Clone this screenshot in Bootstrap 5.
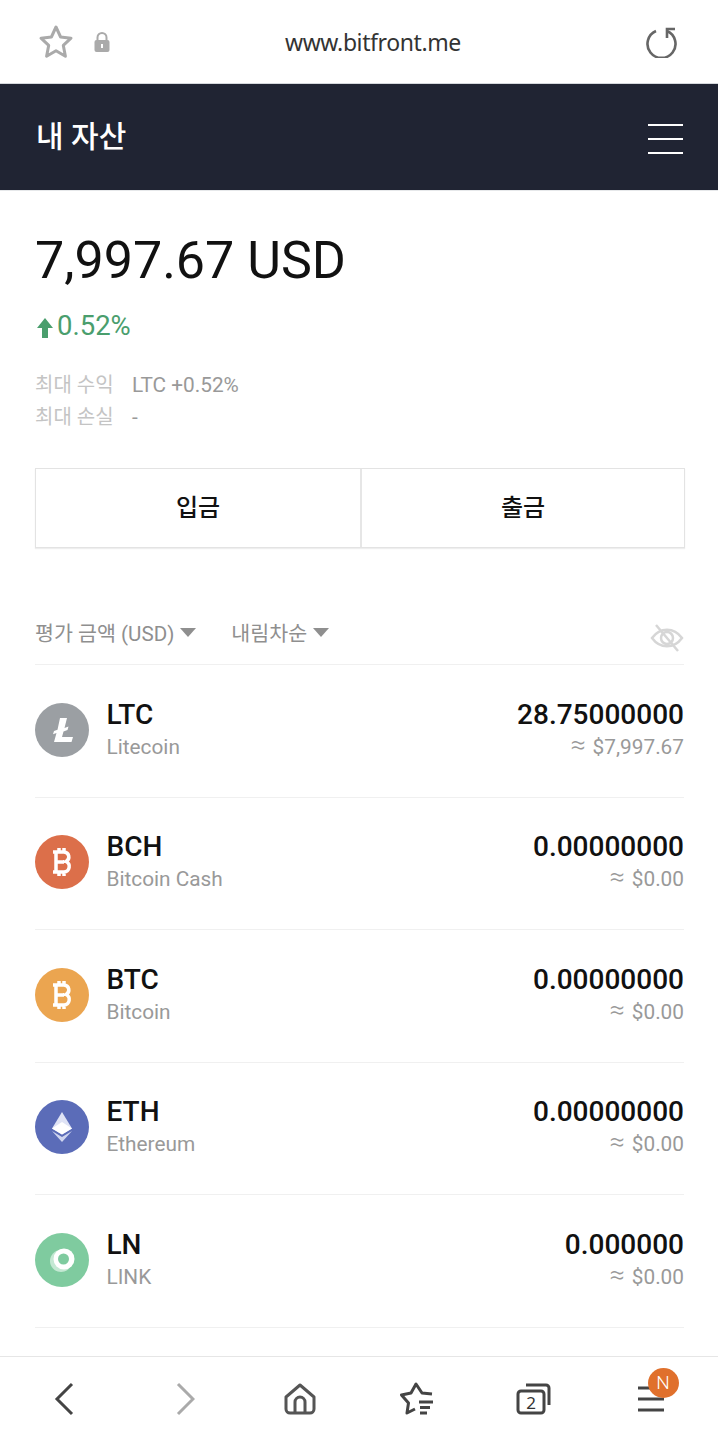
<!DOCTYPE html>
<html lang="ko">
<head>
<meta charset="UTF-8">
<meta name="viewport" content="width=device-width, initial-scale=1.0">
<title>내 자산</title>
<link href="https://cdn.jsdelivr.net/npm/bootstrap@5.3.3/dist/css/bootstrap.min.css" rel="stylesheet">
<style>
body { font-family: Roboto, "Noto Sans CJK KR", sans-serif; color: #111; width: 718px; height: 1440px; overflow: hidden; background: #fff; }
.shell { height: 1440px; }
.url-bar { height: 84px; padding: 0 40px 0 38px; border-bottom: 1px solid #d5d8dc; }
.url-text { font-family: "Noto Sans", sans-serif; font-size: 23px; color: #333; letter-spacing: -0.4px; left: 285px; width: 176px; white-space: nowrap; margin-top: 2px; }
.lock-ic { margin-left: 19px; }
.title-bar { height: 107px; background: #202433; color: #fff; padding: 0 35px 0 36px; border-bottom: 1px solid #e6e8ea; }
.title-text { font-size: 30px; font-weight: 500; line-height: 1; }
.burger { width: 35px; height: 30px; margin-top: 4px; border-top: 2px solid #fff; border-bottom: 2px solid #fff; position: relative; }
.burger::after { content: ""; position: absolute; left: 0; right: 0; top: 12px; height: 2px; background: #fff; }
.content { padding: 0 34px 0 35px; }
.total { font-size: 52px; line-height: 60px; margin-top: 40px; color: #111; }
.rate { font-size: 27.5px; line-height: 32px; color: #4a9e6d; margin-top: 19px; }
.rate svg { margin-left: 2px; }
.stats { margin-top: 28px; font-size: 20px; line-height: 31.5px; color: #c4c4c4; }
.stats span + span { color: #999; margin-left: 18px; font-size: 20.8px; }
.stat-label { display: inline-block; width: 79px; }
.action-row { margin-top: 35px; margin-right: -1px; height: 80px; border: 1px solid #e3e3e3; box-shadow: 0 1px 1px #eee; }
.action-btn { font-size: 24px; font-weight: 500; color: #111; border: 0; background: #fff; border-radius: 0; padding: 0; }
.action-btn + .action-btn { border-left: 2px solid #e6e6e6; }
.sort-row { margin-top: 66px; height: 51px; padding-top: 5px; border-bottom: 1px solid #f0f0f0; font-size: 20.6px; color: #8f8f8f; }
.caret-down { display: inline-block; border-left: 8px solid transparent; border-right: 8px solid transparent; border-top: 9px solid #8f8f8f; margin-left: 6px; vertical-align: 4px; }
.sort-second { margin-left: 35px; }
.coin-row { height: 132.5px; border-bottom: 1px solid #f0f0f0; padding-bottom: 2px; }
.coin-ic { width: 54px; height: 54px; flex: none; margin-right: 17.5px; }
.coin-sym { font-size: 28px; font-weight: 500; line-height: 34px; }
.coin-name { font-size: 20.8px; line-height: 30px; color: #999; }
.coin-amt { font-size: 28px; font-weight: 500; line-height: 34px; text-align: right; }
.coin-usd { font-size: 20.8px; line-height: 30px; color: #999; text-align: right; }
.approx { font-size: 27px; line-height: 20px; margin-right: 7px; font-weight: 300; }
.tool-bar { height: 84px; border-top: 1px solid #e6e6e6; padding-left: 5.5px; }
.tool-slot { width: 117px; }
.tool-badge { position: absolute; top: -18px; left: 10.5px; width: 31px; height: 30px; border-radius: 50%; background: #e0702c; color: #fff; font-size: 19px; line-height: 30px; text-align: center; font-weight: 300; }
</style>
</head>
<body>
<div class="shell d-flex flex-column">
  <div class="url-bar d-flex align-items-center position-relative">
    <svg width="36" height="36" viewBox="0 0 36 36" fill="none" stroke="#aaa" stroke-width="3" stroke-linejoin="round"><path d="M18 3l4.6 10 10.4 1.2-7.700 7.200 2.100 10.800L18 26.800l-9.400 5.400 2.100-10.800L3 14.200 13.400 13z"/></svg>
    <svg class="lock-ic" width="18" height="22" viewBox="0 0 18 22"><path d="M4.500 10V6.500a4.500 4.500 0 0 1 9 0V10" fill="none" stroke="#aaa" stroke-width="2"/><rect x="1.500" y="9" width="15" height="12" rx="2" fill="#aaa"/><rect x="8" y="13" width="2" height="4" fill="#fff"/></svg>
    <div class="url-text position-absolute">www.bitfront.me</div>
    <svg class="ms-auto" width="32" height="32" viewBox="0 0 32 32" fill="none" stroke="#666" stroke-width="2.600"><path d="M10 5a14 14 0 1 0 11 0"/><path d="M21 12V3h8"/></svg>
  </div>
  <div class="title-bar d-flex align-items-center justify-content-between">
    <div class="title-text">내 자산</div>
    <div class="burger"></div>
  </div>
  <div class="content flex-grow-1 overflow-hidden">
    <div class="total">7,997.67 USD</div>
    <div class="rate d-flex align-items-center">
      <svg width="16" height="20" viewBox="0 0 16 20" class="me-1 mt-1"><path d="M8 0l8 10h-5v10H5V10H0z" fill="#4a9e6d"/></svg>0.52%
    </div>
    <div class="stats">
      <div><span class="stat-label">최대 수익</span><span>LTC +0.52%</span></div>
      <div><span class="stat-label">최대 손실</span><span>-</span></div>
    </div>
    <div class="action-row d-flex">
      <button class="action-btn btn flex-fill w-50">입금</button>
      <button class="action-btn btn flex-fill w-50">출금</button>
    </div>
    <div class="sort-row d-flex align-items-start">
      <span>평가 금액 (USD)<i class="caret-down"></i></span>
      <span class="sort-second">내림차순<i class="caret-down"></i></span>
      <svg class="ms-auto mt-1" width="34" height="30" viewBox="0 0 34 30" fill="none" stroke="#d6d6d6" stroke-width="2.500"><path d="M2 15c8-11 22-11 30 0-8 11-22 11-30 0z"/><circle cx="17" cy="15" r="6"/><path d="M6 2l22 26"/></svg>
    </div>

    <div class="coin-row d-flex align-items-center">
      <svg class="coin-ic" viewBox="0 0 54 54"><circle cx="27" cy="27" r="27" fill="#9b9fa3"/><path d="M25 15h7l-2.500 10 4-1.500-1 3.500-4 1.500-1.500 5.500h11l-1.500 5H19l2.500-9-3.500 1.300 1-3.300 3.500-1.300z" fill="#fff"/></svg>
      <div><div class="coin-sym">LTC</div><div class="coin-name">Litecoin</div></div>
      <div class="ms-auto"><div class="coin-amt">28.75000000</div><div class="coin-usd"><span class="approx">≈</span>$7,997.67</div></div>
    </div>
    <div class="coin-row d-flex align-items-center">
      <svg class="coin-ic" viewBox="0 0 54 54"><circle cx="27" cy="27" r="27" fill="#dc6f4a"/><path d="M18 17h11a5 5 0 0 1 2 9.500A5.500 5.500 0 0 1 29 37H18M21 17v20M21 27h8M24 13v4M29 13v4M24 37v4M29 37v4" fill="none" stroke="#fff" stroke-width="3.500"/></svg>
      <div><div class="coin-sym">BCH</div><div class="coin-name">Bitcoin Cash</div></div>
      <div class="ms-auto"><div class="coin-amt">0.00000000</div><div class="coin-usd"><span class="approx">≈</span>$0.00</div></div>
    </div>
    <div class="coin-row d-flex align-items-center">
      <svg class="coin-ic" viewBox="0 0 54 54"><circle cx="27" cy="27" r="27" fill="#eba550"/><path d="M18 17h11a5 5 0 0 1 2 9.500A5.500 5.500 0 0 1 29 37H18M21 17v20M21 27h8M24 13v4M29 13v4M24 37v4M29 37v4" fill="none" stroke="#fff" stroke-width="3.500"/></svg>
      <div><div class="coin-sym">BTC</div><div class="coin-name">Bitcoin</div></div>
      <div class="ms-auto"><div class="coin-amt">0.00000000</div><div class="coin-usd"><span class="approx">≈</span>$0.00</div></div>
    </div>
    <div class="coin-row d-flex align-items-center">
      <svg class="coin-ic" viewBox="0 0 54 54"><circle cx="27" cy="27" r="27" fill="#5b6cb8"/><path d="M27 12l-10 16.500 10 6 10-6z" fill="#dfe3f5"/><path d="M27 22l-10 6.500 10 6 10-6z" fill="#fff"/><path d="M17 31L27 42l10-11-10 6z" fill="#cfd5ef"/></svg>
      <div><div class="coin-sym">ETH</div><div class="coin-name">Ethereum</div></div>
      <div class="ms-auto"><div class="coin-amt">0.00000000</div><div class="coin-usd"><span class="approx">≈</span>$0.00</div></div>
    </div>
    <div class="coin-row d-flex align-items-center">
      <svg class="coin-ic" viewBox="0 0 54 54"><circle cx="27" cy="27" r="27" fill="#7fcb9f"/><circle cx="26" cy="28" r="11" fill="#c4e8d3"/><circle cx="29" cy="26" r="10.500" fill="#fff"/><circle cx="28.500" cy="26" r="5.500" fill="#7fcb9f"/></svg>
      <div><div class="coin-sym">LN</div><div class="coin-name">LINK</div></div>
      <div class="ms-auto"><div class="coin-amt">0.000000</div><div class="coin-usd"><span class="approx">≈</span>$0.00</div></div>
    </div>
  </div>
  <div class="tool-bar d-flex align-items-center">
    <div class="tool-slot d-flex justify-content-center"><svg width="24" height="34" viewBox="0 0 24 34" fill="none" stroke="#444" stroke-width="3"><path d="M20 2L5 17l15 15"/></svg></div>
    <div class="tool-slot d-flex justify-content-center"><svg width="28" height="34" viewBox="0 0 28 34" fill="none" stroke="#aaa" stroke-width="3"><path d="M11 2l15 15-15 15"/></svg></div>
    <div class="tool-slot d-flex justify-content-center"><svg class="ms-1" width="32" height="32" viewBox="0 0 32 32" fill="none" stroke="#555" stroke-width="3" stroke-linejoin="round"><path d="M2 14L16 2l14 12v12a4 4 0 0 1-4 4H6a4 4 0 0 1-4-4z"/><path d="M11 30V19a5 5 0 0 1 10 0v11"/></svg></div>
    <div class="tool-slot d-flex justify-content-center"><svg class="ms-1" width="34" height="34" viewBox="0 0 34 34" fill="none" stroke="#444" stroke-width="3" stroke-linejoin="round"><path d="M32 12l-10-1L16 2l-5 9-9.500 2L8.500 21 7 31l8-4"/><path d="M19 20h14M20 25.500h10M20 31h7"/></svg></div>
    <div class="tool-slot d-flex justify-content-center"><svg class="ms-1" width="36" height="32" viewBox="0 0 36 32" fill="none" stroke="#444" stroke-width="3"><rect x="2" y="8" width="26" height="22" rx="3"/><path d="M10 2h20a3 3 0 0 1 3 3v17"/><text x="15" y="26" text-anchor="middle" font-size="17" font-family="Noto Sans" fill="#333" stroke="none">2</text></svg></div>
    <div class="tool-slot d-flex justify-content-center"><div class="position-relative d-flex ms-1"><svg width="28" height="26" viewBox="0 0 28 26" stroke="#444" stroke-width="3"><path d="M1 2h26M1 13h26M1 24h26"/></svg><span class="tool-badge">N</span></div></div>
  </div>
</div>
<script src="https://cdn.jsdelivr.net/npm/bootstrap@5.3.3/dist/js/bootstrap.bundle.min.js"></script>
</body>
</html>
